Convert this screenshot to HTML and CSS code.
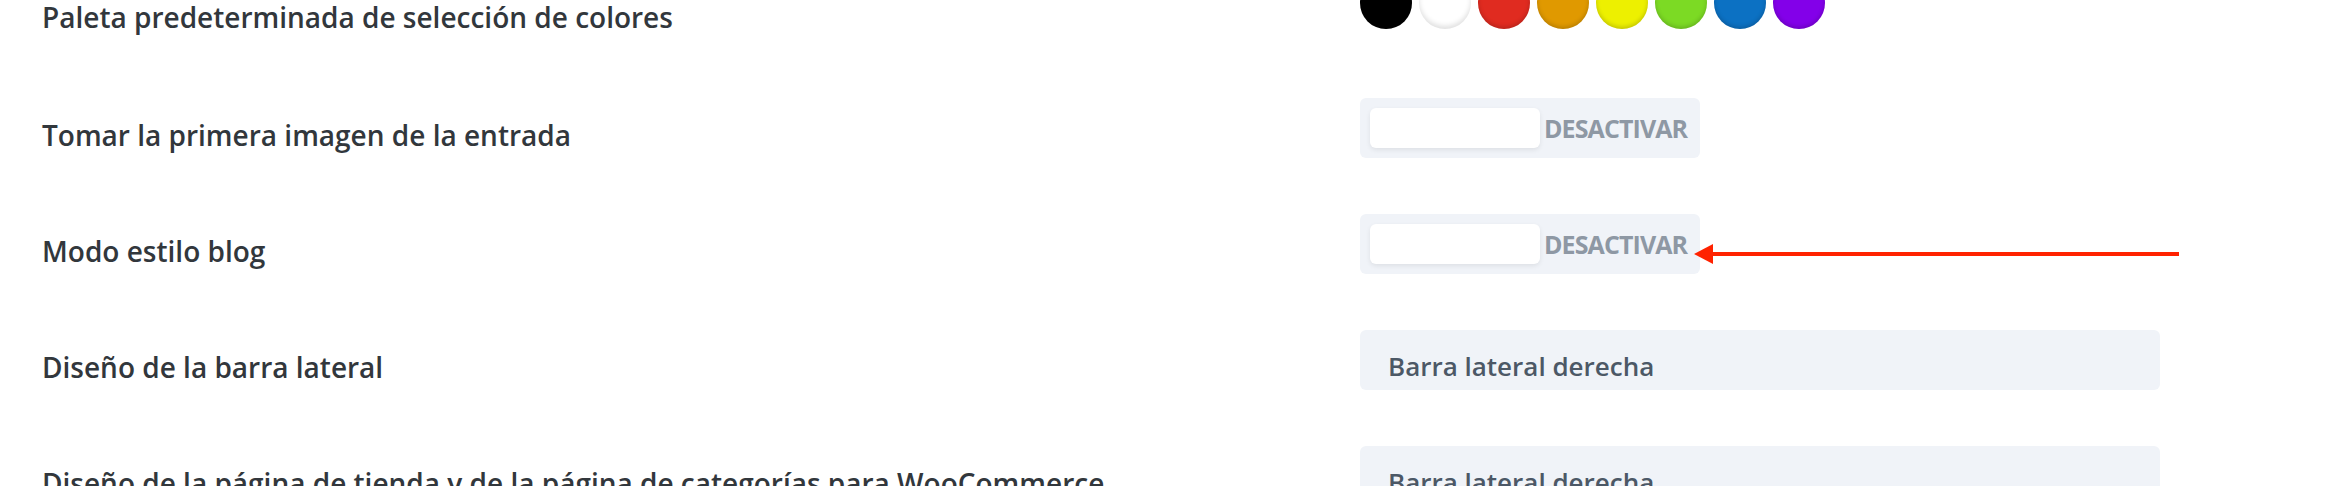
FILE: index.html
```html
<!DOCTYPE html>
<html lang="es">
<head>
<meta charset="UTF-8">
<meta name="viewport" content="width=device-width, initial-scale=1.0">
<title>Opciones del tema</title>
<link rel="stylesheet" href="styles.css">
</head>
<body>
  <div class="settings">
    <div class="row row-palette">
      <div class="label">Paleta predeterminada de selección de colores</div>
      <div class="palette">
        <span class="swatch black"></span>
        <span class="swatch white"></span>
        <span class="swatch red"></span>
        <span class="swatch orange"></span>
        <span class="swatch yellow"></span>
        <span class="swatch green"></span>
        <span class="swatch blue"></span>
        <span class="swatch purple"></span>
      </div>
    </div>
    <div class="row">
      <div class="label">Tomar la primera imagen de la entrada</div>
      <div class="toggle">
        <span class="knob"></span>
        <span class="toggle-text">DESACTIVAR</span>
      </div>
    </div>
    <div class="row">
      <div class="label">Modo estilo blog</div>
      <div class="toggle">
        <span class="knob"></span>
        <span class="toggle-text">DESACTIVAR</span>
      </div>
    </div>
    <div class="row">
      <div class="label">Diseño de la barra lateral</div>
      <div class="select">Barra lateral derecha</div>
    </div>
    <div class="row">
      <div class="label">Diseño de la página de tienda y de la página de categorías para WooCommerce</div>
      <div class="select">Barra lateral derecha</div>
    </div>
  </div>

  <!-- flecha de anotación -->
  <svg class="arrow" width="490" height="24" viewBox="0 0 490 24">
    <rect x="18" y="10" width="469" height="4" fill="#ff2200"/>
    <polygon points="2,12 21,2 21,22" fill="#ff2200"/>
  </svg>
</body>
</html>
```

FILE: styles.css
```css
body {
  margin: 0;
  background-color: #ffffff;
  font-family: "Open Sans", Arial, sans-serif;
  position: relative;
  overflow: hidden;
}
.settings {
  margin-top: -18px;
}
.row {
  display: flex;
  height: 116px;
  padding-left: 42px;
}
.label {
  flex: none;
  width: 1318px;
  padding-top: 23px;
  font-size: 28px;
  line-height: 28px;
  font-weight: 600;
  color: #32373c;
  white-space: nowrap;
}
.row-palette .label {
  padding-top: 21px;
}
.palette {
  display: flex;
  gap: 7px;
  margin-top: -5px;
}
.swatch {
  width: 52px;
  height: 52px;
  border-radius: 50%;
  box-shadow: inset 0 -2px 4px rgba(0, 0, 0, 0.18);
}
.black { background-color: #000000; }
.white { background-color: #ffffff; box-shadow: inset 0 -3px 5px rgba(0, 0, 0, 0.12); }
.red { background-color: #e02b20; }
.orange { background-color: #e09900; }
.yellow { background-color: #edf000; }
.green { background-color: #7cda24; }
.blue { background-color: #0c71c3; }
.purple { background-color: #8300e9; }
.toggle {
  box-sizing: border-box;
  width: 340px;
  height: 60px;
  padding: 10px;
  display: flex;
  align-items: center;
  background-color: #f0f3f8;
  border-radius: 6px;
}
.knob {
  flex: none;
  width: 170px;
  height: 40px;
  background-color: #ffffff;
  border-radius: 6px;
  box-shadow: 0 2px 5px rgba(0, 0, 0, 0.08);
}
.toggle-text {
  margin-left: 4px;
  font-size: 25px;
  font-weight: 700;
  letter-spacing: -0.9px;
  color: #8e98a4;
  white-space: nowrap;
}
.select {
  box-sizing: border-box;
  width: 800px;
  height: 60px;
  padding: 8px 0 0 28px;
  line-height: 56px;
  background-color: #f0f3f8;
  border-radius: 6px;
  font-size: 26px;
  font-weight: 600;
  color: #4c5866;
}
.arrow {
  position: absolute;
  left: 1692px;
  top: 242px;
}
```
